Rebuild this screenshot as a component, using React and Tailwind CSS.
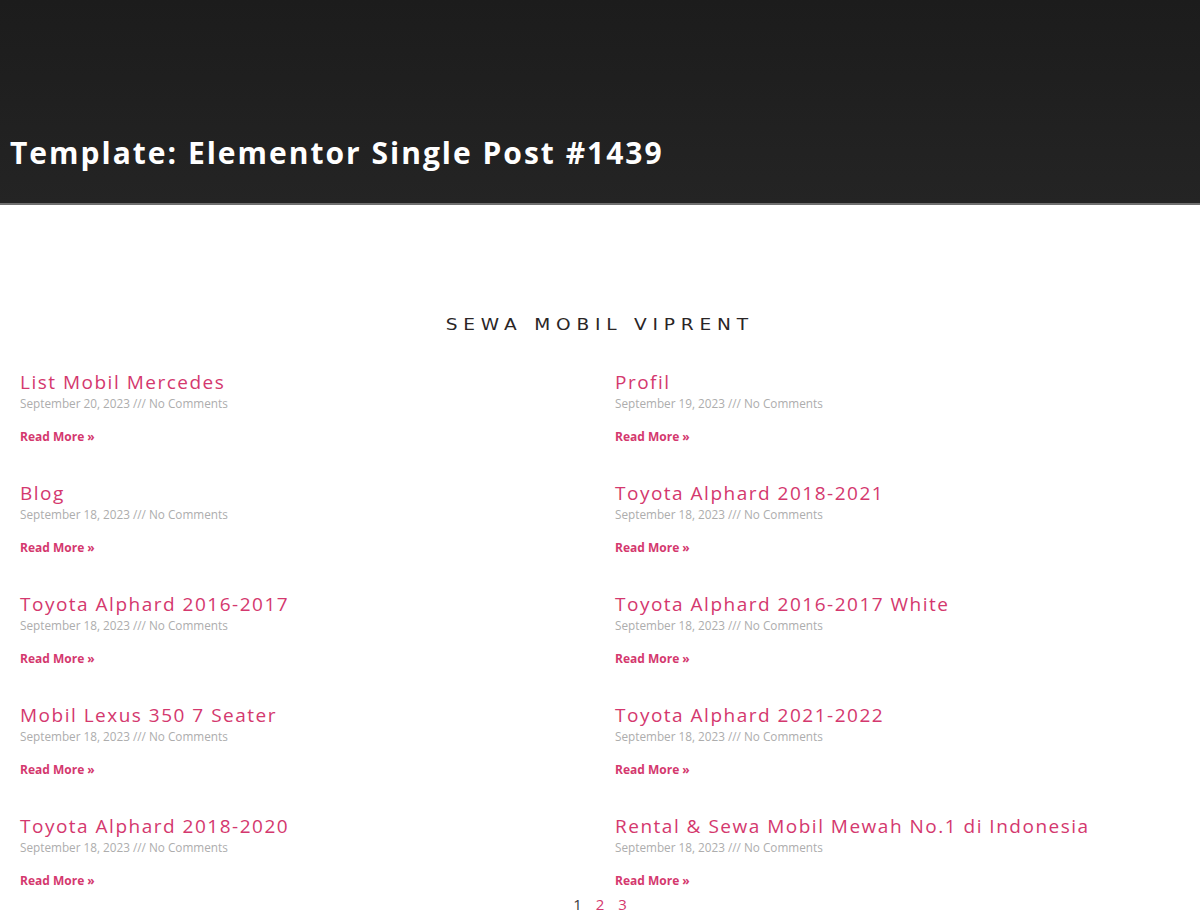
const POSTS = [
  { title: 'List Mobil Mercedes', date: 'September 20, 2023' },
  { title: 'Profil', date: 'September 19, 2023' },
  { title: 'Blog', date: 'September 18, 2023' },
  { title: 'Toyota Alphard 2018-2021', date: 'September 18, 2023' },
  { title: 'Toyota Alphard 2016-2017', date: 'September 18, 2023' },
  { title: 'Toyota Alphard 2016-2017 White', date: 'September 18, 2023' },
  { title: 'Mobil Lexus 350 7 Seater', date: 'September 18, 2023' },
  { title: 'Toyota Alphard 2021-2022', date: 'September 18, 2023' },
  { title: 'Toyota Alphard 2018-2020', date: 'September 18, 2023' },
  { title: 'Rental & Sewa Mobil Mewah No.1 di Indonesia', date: 'September 18, 2023' },
];

const PostItem = ({ post }) => (
  <article className="flex flex-col">
    <h3 className="text-[19px] leading-[24px] font-medium tracking-[1.5px] text-[#d4386e] font-['Open_Sans',sans-serif]">
      {post.title}
    </h3>
    <div className="text-[11.75px] leading-[18px] text-[#adadad] font-['Open_Sans',sans-serif]">
      {post.date} /// No Comments
    </div>
    <a className="mt-4 text-[12px] leading-[18px] font-bold text-[#d4386e] font-['Open_Sans',sans-serif]">
      Read More »
    </a>
  </article>
);

export default function App() {
  return (
    <div className="min-h-screen bg-white">
      {/* Page header */}
      <header className="h-[205px] flex flex-col justify-end pb-[32px] px-[10px] bg-gradient-to-b from-[#1c1c1c] to-[#242424] border-b-2 border-[#6f6f6f]">
        <h1 className="text-[30px] leading-[36px] font-bold tracking-[2px] text-white font-['Open_Sans',sans-serif]">
          Template: Elementor Single Post #1439
        </h1>
      </header>

      <main className="px-5">
        <div className="mt-[110px] flex justify-center">
          <h2 className="inline-block scale-x-[1.16] text-[16px] leading-[20px] tracking-[5px] text-[#2a2526] font-['DejaVu_Sans',sans-serif]">
            SEWA MOBIL VIPRENT
          </h2>
        </div>

        <div className="mt-[35px] grid grid-cols-2 gap-x-[30px] gap-y-[35px]">
          {POSTS.map((post, i) => (
            <PostItem key={i} post={post} />
          ))}
        </div>

        {/* Pagination */}
        <nav className="mt-[3px] flex justify-center gap-[14px] text-[15px] leading-[22px] font-['Open_Sans',sans-serif]">
          <span className="text-[#3a3a3a]">1</span>
          <a className="text-[#d4386e]">2</a>
          <a className="text-[#d4386e]">3</a>
        </nav>
      </main>
    </div>
  );
}
